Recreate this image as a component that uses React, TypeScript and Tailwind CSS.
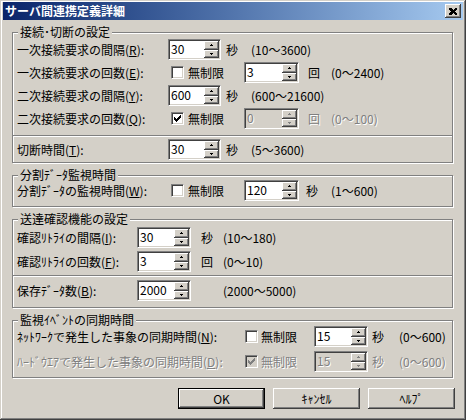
import React from 'react';

const raised = 'bg-[#d4d0c8] shadow-[inset_-1px_-1px_#404040,inset_1px_1px_#ffffff,inset_-2px_-2px_#808080]';
const sunken = 'border border-t-[#808080] border-l-[#808080] border-r-white border-b-white shadow-[inset_1px_1px_#404040,inset_-1px_-1px_#d4d0c8]';
const grayText = 'text-[#808080] [text-shadow:1px_1px_#ffffff]';

function Arrow({ up, disabled }: { up?: boolean; disabled?: boolean }) {
  return (
    <svg width="5" height="3" viewBox="0 0 5 3" shapeRendering="crispEdges" className="block">
      <g fill={disabled ? '#808080' : '#000'}>
        {up ? (
          <>
            <rect x="2" y="0" width="1" height="1" />
            <rect x="1" y="1" width="3" height="1" />
          </>
        ) : (
          <>
            <rect x="1" y="1" width="3" height="1" />
            <rect x="2" y="2" width="1" height="1" />
          </>
        )}
      </g>
    </svg>
  );
}

function SpinEdit({ value, w, disabled }: { value: string; w: string; disabled?: boolean }) {
  return (
    <div className={`flex h-[21px] shrink-0 p-[1px] ${w} ${sunken}`}>
      <div className={`flex-1 pl-[1px] leading-[15px] ${disabled ? 'bg-[#d4d0c8] ' + grayText : 'bg-white'}`}>{value}</div>
      <div className="flex w-[15px] flex-col">
        <div className={`flex flex-1 items-center justify-center ${raised}`}>
          <Arrow up disabled={disabled} />
        </div>
        <div className={`flex flex-1 items-center justify-center ${raised}`}>
          <Arrow disabled={disabled} />
        </div>
      </div>
    </div>
  );
}

function Check({ checked, disabled }: { checked?: boolean; disabled?: boolean }) {
  return (
    <span className={`flex h-[13px] w-[13px] shrink-0 items-center justify-center ${sunken} ${disabled ? 'bg-[#d4d0c8]' : 'bg-white'}`}>
      {checked && (
        <svg width="7" height="7" viewBox="0 0 7 7" shapeRendering="crispEdges">
          <path d="M0 2h1v1h1v1h1v-1h1v-1h1v-1h1v-1h1v3h-1v1h-1v1h-1v1h-1v1h-1v-1h-1v-1h-1z" fill={disabled ? '#808080' : '#000'} />
        </svg>
      )}
    </span>
  );
}

function Group({ label, className, children }: { label: string; className: string; children: React.ReactNode }) {
  return (
    <div className={`relative ml-[9px] w-[441px] border border-[#808080] shadow-[inset_1px_1px_#ffffff,1px_1px_#ffffff] ${className}`}>
      <span className="absolute -top-[8px] left-[5px] bg-[#d4d0c8] px-[2px] leading-[14px]">{label}</span>
      {children}
    </div>
  );
}

function Sep({ className }: { className: string }) {
  return <div className={`h-[2px] border-t border-b border-t-[#808080] border-b-white ${className}`} />;
}

function Row({ className, children }: { className?: string; children: React.ReactNode }) {
  return <div className={`flex h-[21px] items-center pl-[4px] ${className ?? ''}`}>{children}</div>;
}

export default function App() {
  return (
    <div className="h-[420px] w-[466px] bg-[#d4d0c8] px-[3px] pt-[2px] text-[12px] leading-[14px] text-black shadow-[inset_-1px_-1px_#404040,inset_1px_1px_#d4d0c8,inset_-2px_-2px_#808080,inset_2px_2px_#ffffff] font-['Noto_Sans_CJK_JP','Noto_Sans_CJK_SC',sans-serif]">
      <div className="flex h-[18px] items-center justify-between bg-linear-to-r from-[#0a246a] to-[#a6caf0] pl-[2px] pr-[2px]">
        <span className="font-bold text-white">サーバ間連携定義詳細</span>
        <span className={`flex h-[14px] w-[16px] items-center justify-center ${raised}`}>
          <svg width="8" height="7" viewBox="0 0 8 7" shapeRendering="crispEdges">
            <path d="M0 0h2l2 2 2-2h2v1l-2 2.5 2 2.5v1h-2l-2-2-2 2h-2v-1l2-2.5-2-2.5z" fill="#000" />
          </svg>
        </span>
      </div>

      <Group label="接続･切断の設定" className="mt-[12px] h-[131px]">
        <Row className="mt-[6px]">
          <span className="w-[151px] shrink-0">一次接続要求の間隔(<u>R</u>):</span>
          <SpinEdit value="30" w="w-[53px]" />
          <span className="ml-[5px]">秒</span>
          <span className="ml-[13px]">(10～3600)</span>
        </Row>
        <Row className="mt-[2px]">
          <span className="w-[151px] shrink-0">一次接続要求の回数(<u>E</u>):</span>
          <span className="ml-[3px]"><Check /></span>
          <span className="ml-[4px] w-[56px] shrink-0">無制限</span>
          <SpinEdit value="3" w="w-[55px]" />
          <span className="ml-[9px]">回</span>
          <span className="ml-[11px]">(0～2400)</span>
        </Row>
        <Row className="mt-[2px]">
          <span className="w-[151px] shrink-0">二次接続要求の間隔(<u>Y</u>):</span>
          <SpinEdit value="600" w="w-[53px]" />
          <span className="ml-[5px]">秒</span>
          <span className="ml-[13px]">(600～21600)</span>
        </Row>
        <Row className="mt-[2px]">
          <span className="w-[151px] shrink-0">二次接続要求の回数(<u>Q</u>):</span>
          <span className="ml-[3px]"><Check checked /></span>
          <span className="ml-[4px] w-[56px] shrink-0">無制限</span>
          <SpinEdit value="0" w="w-[55px]" disabled />
          <span className={`ml-[9px] ${grayText}`}>回</span>
          <span className={`ml-[11px] ${grayText}`}>(0～100)</span>
        </Row>
        <Sep className="mt-[6px]" />
        <Row className="mt-[2px]">
          <span className="w-[151px] shrink-0">切断時間(<u>T</u>):</span>
          <SpinEdit value="30" w="w-[53px]" />
          <span className="ml-[5px]">秒</span>
          <span className="ml-[13px]">(5～3600)</span>
        </Row>
      </Group>

      <Group label="分割ﾃﾞｰﾀ監視時間" className="mt-[12px] h-[32px]">
        <Row className="mt-[4px]">
          <span className="w-[151px] shrink-0">分割ﾃﾞｰﾀの監視時間(<u>W</u>):</span>
          <span className="ml-[3px]"><Check /></span>
          <span className="ml-[4px] w-[56px] shrink-0">無制限</span>
          <SpinEdit value="120" w="w-[55px]" />
          <span className="ml-[7px]">秒</span>
          <span className="ml-[13px]">(1～600)</span>
        </Row>
      </Group>

      <Group label="送達確認機能の設定" className="mt-[12px] h-[89px]">
        <Row className="mt-[7px]">
          <span className="w-[120px] shrink-0">確認ﾘﾄﾗｲの間隔(<u>I</u>):</span>
          <SpinEdit value="30" w="w-[54px]" />
          <span className="ml-[10px] w-[22px] shrink-0">秒</span>
          <span>(10～180)</span>
        </Row>
        <Row className="mt-[3px]">
          <span className="w-[120px] shrink-0">確認ﾘﾄﾗｲの回数(<u>F</u>):</span>
          <SpinEdit value="3" w="w-[54px]" />
          <span className="ml-[10px] w-[22px] shrink-0">回</span>
          <span>(0～10)</span>
        </Row>
        <Sep className="mt-[3px]" />
        <Row className="mt-[3px]">
          <span className="w-[120px] shrink-0">保存ﾃﾞｰﾀ数(<u>B</u>):</span>
          <SpinEdit value="2000" w="w-[54px]" />
          <span className="ml-[10px] w-[22px] shrink-0" />
          <span>(2000～5000)</span>
        </Row>
      </Group>

      <Group label="監視ｲﾍﾞﾝﾄの同期時間" className="mt-[12px] h-[58px]">
        <Row className="mt-[5px]">
          <span className="w-[228px] shrink-0 whitespace-nowrap">ﾈｯﾄﾜｰｸで発生した事象の同期時間(<u>N</u>):</span>
          <Check />
          <span className="ml-[3px] w-[53px] shrink-0">無制限</span>
          <SpinEdit value="15" w="w-[54px]" />
          <span className="ml-[4px]">秒</span>
          <span className="ml-[15px]">(0～600)</span>
        </Row>
        <Row className={`mt-[4px] ${grayText}`}>
          <span className="w-[228px] shrink-0 whitespace-nowrap">ﾊｰﾄﾞｳｴｱで発生した事象の同期時間(<u>D</u>):</span>
          <Check checked disabled />
          <span className="ml-[3px] w-[53px] shrink-0">無制限</span>
          <SpinEdit value="15" w="w-[54px]" disabled />
          <span className="ml-[4px]">秒</span>
          <span className="ml-[15px]">(0～600)</span>
        </Row>
      </Group>

      <div className="mt-[10px] flex justify-end gap-[8px] pr-[8px]">
        <button className="h-[21px] w-[87px] border border-black bg-[#d4d0c8] p-0">
          <span className={`flex h-full w-full items-center justify-center ${raised}`}>OK</span>
        </button>
        <button className={`flex h-[21px] w-[87px] items-center justify-center ${raised}`}>ｷｬﾝｾﾙ</button>
        <button className={`flex h-[21px] w-[87px] items-center justify-center ${raised}`}>ﾍﾙﾌﾟ</button>
      </div>
    </div>
  );
}
